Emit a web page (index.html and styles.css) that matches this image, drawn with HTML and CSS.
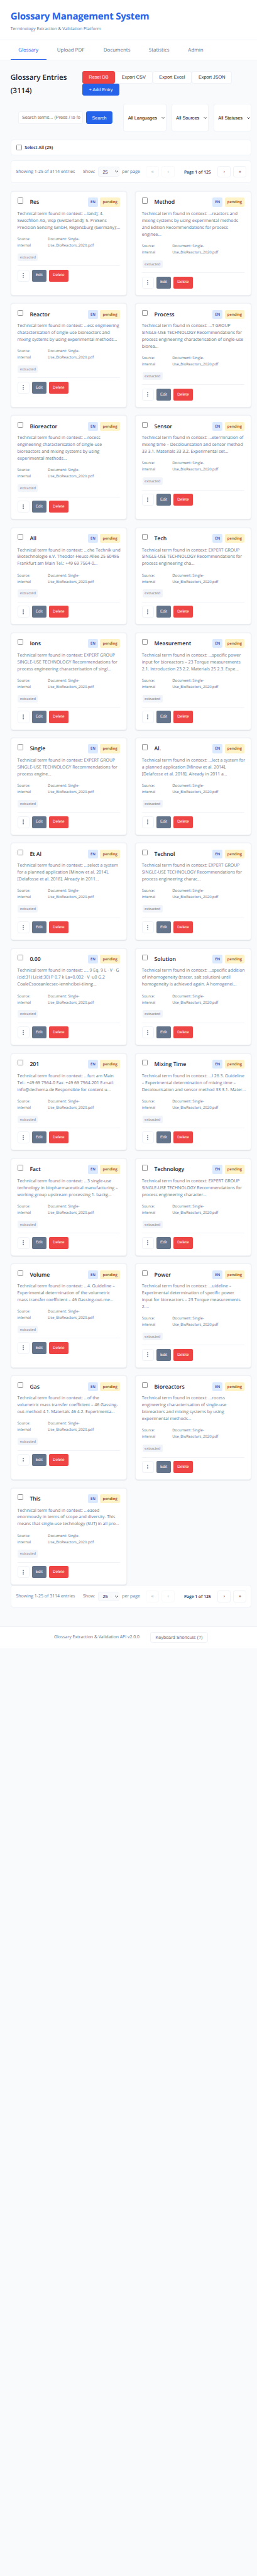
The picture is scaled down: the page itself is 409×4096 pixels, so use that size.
FILE: index.html
```html
<!DOCTYPE html>
<html lang="en">
<head>
<meta charset="utf-8">
<title>Glossary Management System</title>
<link rel="stylesheet" href="styles.css">
</head>
<body>
<div class="page">
  <header class="header">
    <h1 class="header-title"><span>Glossary Management System</span></h1>
    <p class="header-sub"><span>Terminology Extraction &amp; Validation Platform</span></p>
  </header>
  <nav class="nav">
    <a class="tab tab-active"><span>Glossary</span></a>
    <a class="tab tab-upload"><span>Upload PDF</span></a>
    <a class="tab tab-docs"><span>Documents</span></a>
    <a class="tab tab-stats"><span>Statistics</span></a>
    <a class="tab tab-admin"><span>Admin</span></a>
  </nav>
  <main class="main">
    <section class="toolbar">
      <h2 class="heading">Glossary Entries<br>(3114)</h2>
      <div class="actions">
        <button class="btn btn-danger w-reset">Reset DB</button>
        <button class="btn btn-plain w-csv">Export CSV</button>
        <button class="btn btn-plain w-excel">Export Excel</button>
        <button class="btn btn-plain w-json">Export JSON</button>
        <button class="btn btn-primary w-add">+ Add Entry</button>
      </div>
    </section>
    <section class="filters">
      <div class="search">
        <div class="search-input"><span>Search terms... (Press / to fo</span></div>
        <button class="btn btn-primary w-search">Search</button>
      </div>
      <div class="select w-lang"><span>All Languages</span><svg class="chev" viewBox="0 0 10 6"><path d="M1 1l4 4 4-4"/></svg></div>
      <div class="select w-src"><span>All Sources</span><svg class="chev" viewBox="0 0 10 6"><path d="M1 1l4 4 4-4"/></svg></div>
      <div class="select w-stat"><span>All Statuses</span><svg class="chev" viewBox="0 0 10 6"><path d="M1 1l4 4 4-4"/></svg></div>
    </section>
    <section class="select-all"><i class="check"></i><span>Select All (25)</span></section>
    <section class="pager">
      <span class="pager-info">Showing 1-25 of 3114 entries</span>
      <span class="pager-show">Show:</span>
      <div class="pager-size"><span>25</span><svg class="chev" viewBox="0 0 10 6"><path d="M1 1l4 4 4-4"/></svg></div>
      <span class="pager-per">per page</span>
      <button class="pg pg-off">«</button>
      <button class="pg pg-off">‹</button>
      <span class="pager-page">Page 1 of 125</span>
      <button class="pg">›</button>
      <button class="pg">»</button>
    </section>
    <section class="grid" id="grid"></section>
    <section class="pager pager-bottom">
      <span class="pager-info">Showing 1-25 of 3114 entries</span>
      <span class="pager-show">Show:</span>
      <div class="pager-size"><span>25</span><svg class="chev" viewBox="0 0 10 6"><path d="M1 1l4 4 4-4"/></svg></div>
      <span class="pager-per">per page</span>
      <button class="pg pg-off">«</button>
      <button class="pg pg-off">‹</button>
      <span class="pager-page">Page 1 of 125</span>
      <button class="pg">›</button>
      <button class="pg">»</button>
    </section>
  </main>
  <footer class="footer">
    <span class="footer-text">Glossary Extraction &amp; Validation API v2.0.0</span>
    <button class="footer-btn">Keyboard Shortcuts (?)</button>
  </footer>
</div>
<script src="app.js"></script>
</body>
</html>
```

FILE: styles.css
```css
* { box-sizing: border-box; margin: 0; padding: 0; }
html { background: #f8fafc; }
body { background: #f8fafc; overflow-x: hidden; }
.page {
  zoom: 0.5216;
  width: 784px;
  font-family: "Open Sans", "Noto Sans", sans-serif;
  color: #1e293b;
  text-rendering: geometricPrecision;
  white-space: nowrap;
}
button { font-family: "Liberation Sans", Arial, sans-serif; border: 0; text-rendering: geometricPrecision; white-space: nowrap; }

.header { height: 123.5px; padding: 26px 32px 0; background: #fff; border-bottom: 1px solid #eff3f8; }
.header-title { font-size: 29px; line-height: 48px; font-weight: 700; color: #2563eb; letter-spacing: -0.48px; }
.header-sub { margin-top: 4px; font-size: 13.2px; line-height: 22px; color: #64748b; }

.nav { height: 60.5px; padding: 0 32px; background: #fff; border-bottom: 1px solid #eff3f8; display: flex; gap: 8px; }
.tab { padding: 0 24px; height: 59.5px; font-size: 15.3px; line-height: 60px; font-weight: 500; color: #64748b; }
.tab-active { width: 110px; color: #2563eb; border-bottom: 2.5px solid #2563eb; }
.tab-upload { width: 134px; }
.tab-docs { width: 130px; }
.tab-stats { width: 112px; }
.tab-admin { width: 96px; }

.main { padding: 33.5px 16.5px 0 32px; }
.toolbar { display: flex; height: 98.5px; }
.heading { width: 219px; font-size: 22.5px; line-height: 38.7px; font-weight: 600; letter-spacing: -0.15px; }
.actions { width: 480px; display: flex; flex-wrap: wrap; align-content: flex-start; }
.btn { height: 36.7px; font-size: 14px; border-radius: 6px; color: #fff; display: flex; align-items: center; justify-content: center; }
.btn-danger { background: #ef4444; }
.btn-primary { background: #2563eb; }
.btn-plain { background: #fff; color: #1e293b; border: 1px solid #eff3f8; }
.w-reset { width: 100px; }
.w-csv { width: 114px; }
.w-excel { width: 120px; }
.w-json { width: 123px; }
.w-add { width: 113px; }
.w-search { width: 82px; height: 37.5px; }

.filters { display: flex; height: 85.5px; font-family: "Liberation Sans", Arial, sans-serif; font-size: 14px; }
.search { width: 344.5px; padding-left: 24px; display: flex; align-items: center; gap: 8px; }
.search-input { width: 198px; height: 37.5px; padding: 0 0 0 9px; line-height: 33.5px; background: #fff; border: 1px solid #eff3f8; border-radius: 6px; color: #757575; }
.select { display: flex; align-items: center; justify-content: space-between; padding: 0 2px 0 12px; background: #fff; border: 1px solid #eff3f8; border-radius: 6px; color: #000; flex-shrink: 0; }
.w-lang { width: 131px; margin-right: 16px; }
.w-src { width: 112.5px; margin-right: 16px; }
.w-stat { width: 115.5px; }
.chev { width: 10px; height: 6px; fill: none; stroke: #111; stroke-width: 1.9; }

.select-all { margin-top: 24px; height: 48.5px; padding: 0 15px; display: flex; align-items: center; gap: 8.5px; background: #fff; border: 1px solid #eff3f8; border-radius: 8px; font-size: 13.5px; font-weight: 600; }
.check { display: block; width: 18px; height: 18px; border: 1px solid #8f8f8f; border-radius: 2.5px; background: #fff; }

.pager { margin-top: 15px; height: 69px; display: flex; align-items: center; padding: 0 0 0 15px; background: #fff; border: 1px solid #eff3f8; border-radius: 8px; font-size: 13.4px; color: #64748b; }
.pager > * { flex-shrink: 0; }
.pager-bottom { margin-top: 0; }
.pager-info { width: 204px; font-weight: 500; }
.pager-show { width: 46.5px; font-weight: 500; }
.pager-size { width: 65px; height: 30px; padding: 0 2px 0 12px; display: flex; align-items: center; justify-content: space-between; background: #f8fafc; border: 1px solid #eff3f8; border-radius: 6px; color: #1e293b; font-family: "Liberation Sans", Arial, sans-serif; font-size: 14px; }
.pager-per { width: 81px; padding-left: 8px; }
.pg { width: 40px; height: 35.5px; margin-right: 8px; background: #fff; border: 1px solid #eff3f8; border-radius: 6px; font-size: 14px; color: #1e293b; padding-bottom: 2px; }
.pg:last-child { margin-right: 0; }
.pg-off { opacity: .45; }
.pager-page { width: 122.5px; text-align: center; font-size: 12.9px; font-weight: 600; color: #1e293b; }

.grid { margin-top: 25px; display: grid; grid-template-columns: 355px 355px; column-gap: 25px; row-gap: 24px; }
.card { min-height: 296.65px; padding: 17.8px 18.6px 10px 19px; background: #fff; border: 1px solid #eff3f8; border-radius: 8px; box-shadow: 0 1px 3px rgba(0, 0, 0, .1); }
.card-tall { min-height: 317.65px; }
.card-head { display: flex; height: 27.3px; }
.card-title { flex: 1; padding-left: 20px; font-size: 16.6px; font-weight: 600; line-height: 30px; }
.badge { height: 27.3px; border-radius: 4px; font-size: 11.4px; line-height: 27px; font-weight: 600; text-align: center; }
.badge-lang { width: 31px; margin-right: 6.3px; background: #dbeafe; color: #1e40af; }
.badge-state { width: 61px; background: #fef3c7; color: #92400e; }
.desc { margin-top: 14.2px; font-size: 13.3px; line-height: 21px; color: #64748b; }
.desc span { display: block; width: max-content; }
.meta { margin-top: 11.9px; display: flex; font-size: 11.4px; line-height: 19.2px; color: #64748b; }
.meta-src { width: 93px; }
.tag { margin: 14.9px 0 0 1.5px; width: 61.5px; height: 23.3px; line-height: 23.5px; background: #f1f5f9; border-radius: 4px; font-size: 11px; color: #64748b; text-align: center; }
.card-actions { margin-top: 14px; padding-top: 10.4px; border-top: 1px solid #eff3f8; display: flex; gap: 7.5px; }
.menu-btn { width: 36.5px; height: 36.5px; background: #fff; border: 1px solid #eff3f8; border-radius: 6px; display: flex; align-items: center; justify-content: center; }
.menu-btn svg { width: 4px; height: 15px; fill: #64748b; }
.card-btn { height: 36.5px; border-radius: 4px; font-size: 12.2px; color: #fff; padding-bottom: 1px; }
.card-edit { width: 45px; background: #64748b; }
.card-delete { width: 59px; background: #ef4444; }

.footer { margin-top: 56.5px; height: 65.5px; background: #fff; border-top: 1px solid #eff3f8; display: flex; align-items: center; padding-left: 165px; color: #64748b; }
.footer-text { width: 292.5px; font-size: 13.3px; padding-top: 2px; }
.footer-btn { width: 177.5px; height: 33.5px; background: #fff; border: 1px solid #eff3f8; border-radius: 6px; font-size: 14px; color: #64748b; }
```

FILE: app.js
```js
const T = "Technical term found in context: ";
const SUT = "SINGLE-USE TECHNOLOGY Recommendations for";
const entries = [
  ["Res", T + "...land); 4.", "Swissfillon AG, Visp (Switzerland); 5. PreSens", "Precision Sensing GmbH, Regensburg (Germany);..."],
  ["Method", T + "...reactors and", "mixing systems by using experimental methods", "2nd Edition Recommendations for process", "enginee..."],
  ["Reactor", T + "...ess engineering", "characterisation of single-use bioreactors and", "mixing systems by using experimental methods..."],
  ["Process", T + "...T GROUP", SUT, "process engineering characterisation of single-use", "biorea..."],
  ["Bioreactor", T + "...rocess", "engineering characterisation of single-use", "bioreactors and mixing systems by using", "experimental methods..."],
  ["Sensor", T + "...etermination of", "mixing time – Decolourisation and sensor method", "33 3.1. Materials 33 3.2. Experimental set..."],
  ["All", T + "...che Technik und", "Biotechnologie e.V. Theodor-Heuss-Allee 25 60486", "Frankfurt am Main Tel.: +49 69 7564-0..."],
  ["Tech", T + "EXPERT GROUP", SUT, "process engineering cha..."],
  ["Ions", T + "EXPERT GROUP", SUT, "process engineering characterisation of singl..."],
  ["Measurement", T + "...specific power", "input for bioreactors – 23 Torque measurements", "2.1. Introduction 23 2.2. Materials 25 2.3. Expe..."],
  ["Single", T + "EXPERT GROUP", SUT, "process engine..."],
  ["Al.", T + "...lect a system for", "a planned application [Minow et al. 2014],", "[Delafosse et al. 2018]. Already in 2011 a..."],
  ["Et Al", T + "...select a system", "for a planned application [Minow et al. 2014],", "[Delafosse et al. 2018]. Already in 2011..."],
  ["Technol", T + "EXPERT GROUP", SUT, "process engineering charac..."],
  ["0.00", T + ".... 9 Eq. 9 L · V · G", "(cid:31) L(cid:30) P 0.7 k La=0.002 · V ·u0 G.2", "CoaleCsoceanlecsec-iennhcibei-tiinng..."],
  ["Solution", T + "...specific addition", "of inhomogeneity (tracer, salt solution) until", "homogeneity is achieved again. A homogenei..."],
  ["201", T + "...furt am Main", "Tel.: +49 69 7564-0 Fax: +49 69 7564-201 E-mail:", "info@dechema.de Responsible for content u..."],
  ["Mixing Time", T + "...l 26 3. Guideline", "– Experimental determination of mixing time –", "Decolourisation and sensor method 33 3.1. Mater..."],
  ["Fact", T + "...3 single-use", "technology in biopharmaceutical manufacturing –", "working group upstream processing 1. backg..."],
  ["Technology", T + "EXPERT GROUP", SUT, "process engineering character..."],
  ["Volume", T + "...4. Guideline –", "Experimental determination of the volumetric", "mass transfer coefficient – 46 Gassing-out-me..."],
  ["Power", T + "...uideline –", "Experimental determination of specific power", "input for bioreactors – 23 Torque measurements", "2...."],
  ["Gas", T + "...of the", "volumetric mass transfer coefficient – 46 Gassing-", "out-method 4.1. Materials 46 4.2. Experimenta..."],
  ["Bioreactors", T + "...rocess", "engineering characterisation of single-use", "bioreactors and mixing systems by using", "experimental methods..."],
  ["This", T + "...eased", "enormously in terms of scope and diversity. This", "means that single-use technology (SUT) in all pro..."]
];

document.getElementById("grid").innerHTML = entries.map(([term, ...lines]) => `
  <article class="card${lines.length > 3 ? " card-tall" : ""}">
    <div class="card-head">
      <i class="check"></i>
      <h3 class="card-title">${term}</h3>
      <span class="badge badge-lang">EN</span>
      <span class="badge badge-state">pending</span>
    </div>
    <p class="desc">${lines.map(l => `<span>${l}</span>`).join("")}</p>
    <div class="meta">
      <div class="meta-src">Source:<br>internal</div>
      <div>Document: Single-<br>Use_BioReactors_2020.pdf</div>
    </div>
    <div class="tag">extracted</div>
    <div class="card-actions">
      <button class="menu-btn"><svg viewBox="0 0 4 15"><circle cx="2" cy="2" r="1.8"/><circle cx="2" cy="7.5" r="1.8"/><circle cx="2" cy="13" r="1.8"/></svg></button>
      <button class="card-btn card-edit">Edit</button>
      <button class="card-btn card-delete">Delete</button>
    </div>
  </article>`).join("");
```
